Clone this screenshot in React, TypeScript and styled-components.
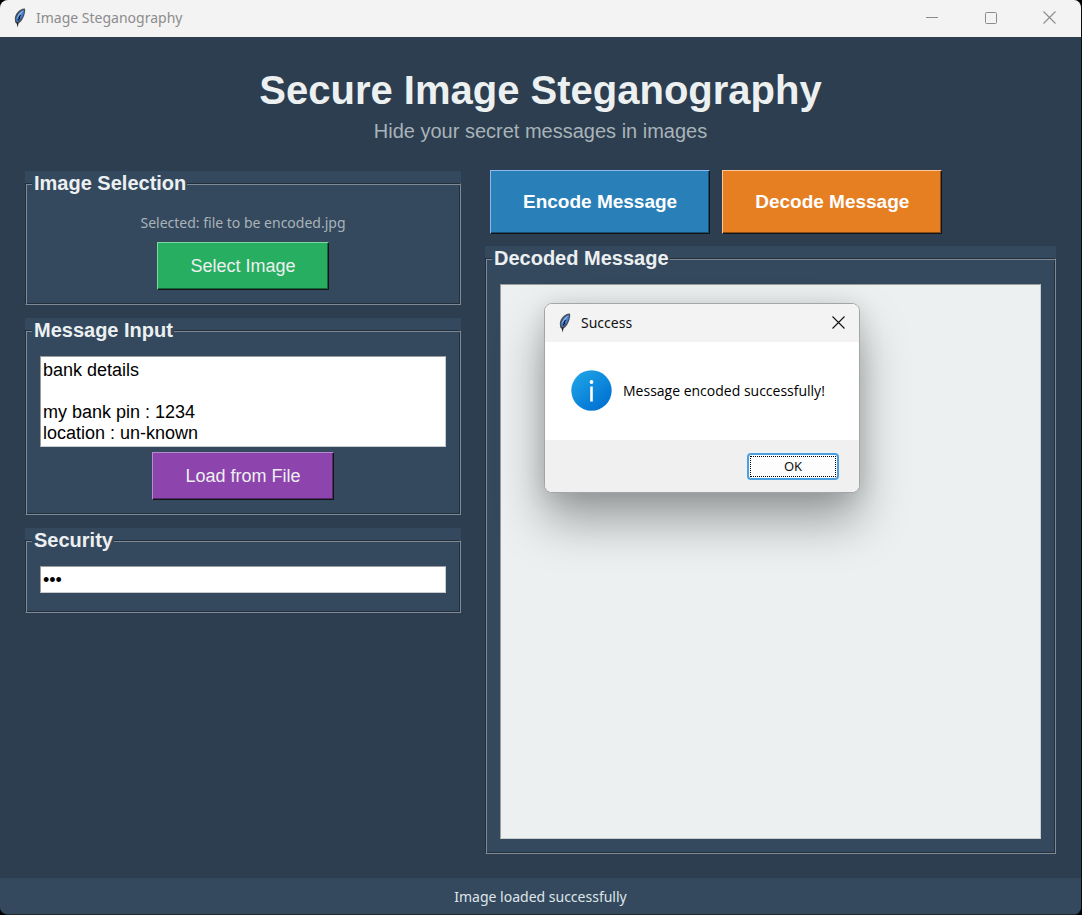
import React, { useState } from "react";
import styled, { createGlobalStyle, css } from "styled-components";

const ARIAL = '"Liberation Sans", Arial, sans-serif';
const SEGOE = '"Noto Sans", "Open Sans", sans-serif';

const GlobalStyle = createGlobalStyle`
  * { box-sizing: border-box; }
  body { margin: 0; background: #000; font-family: ${SEGOE}; }
  button, input, textarea { font: inherit; margin: 0; }
`;

const Window = styled.div`
  position: relative;
  display: flex;
  flex-direction: column;
  min-height: 100vh;
  background: #2c3e50;
  border-right: 1px solid #0b0d10;
  border-bottom: 1px solid #24282d;
  border-radius: 8px;
  overflow: hidden;
`;

const TitleBar = styled.header`
  display: flex;
  align-items: center;
  gap: 8px;
  height: 37px;
  padding: 0 2px 2px 12px;
  background: #f3f3f3;
  color: #8c8c8c;
`;

const WindowTitle = styled.span`
  flex: 1;
  font-size: 14px;
  line-height: 20px;
`;

const CaptionButtons = styled.div`
  display: flex;
`;

const CaptionButton = styled.button`
  display: grid;
  place-items: center;
  width: 59px;
  height: 35px;
  padding: 0;
  border: 0;
  background: transparent;
  color: inherit;
`;

const Main = styled.main`
  flex: 1;
  display: flex;
  flex-direction: column;
  padding: 27px 25px 24px;
`;

const Heading = styled.h1`
  margin: 0;
  color: #ecf0f1;
  font: bold 40px/52px ${ARIAL};
  text-align: center;
`;

const Subtitle = styled.p`
  margin: 0 0 24px;
  color: #a9b3b8;
  font: 20px/30px ${ARIAL};
  text-align: center;
`;

const Columns = styled.div`
  flex: 1;
  display: grid;
  grid-template-columns: 436px 1fr;
  gap: 24px;
`;

const Column = styled.div<{ $gap: number }>`
  display: flex;
  flex-direction: column;
  gap: ${(p) => p.$gap}px;
  padding-top: 1px;
`;

const Panel = styled.section<{ $grow?: boolean }>`
  display: flex;
  background: #34495e;
  ${(p) => p.$grow && css`flex: 1;`}
`;

const Group = styled.fieldset`
  flex: 1;
  min-width: 0;
  margin: 0;
  padding: 13px 14px 14px;
  border: 1px solid;
  border-color: #222f3d #7f8a96 #7f8a96 #222f3d;
  box-shadow: inset 1px 1px #7f8a96, inset -1px -1px #222f3d;
`;

const Legend = styled.legend`
  margin-left: -8px;
  padding: 0 1px 0 2px;
  background: #34495e;
  color: #ecf0f1;
  font: bold 20px/25px ${ARIAL};
`;

const Stack = styled.div`
  display: flex;
  flex-direction: column;
  align-items: center;
  gap: 5px;
  height: 100%;
`;

const FileLabel = styled.p`
  margin: 0;
  color: #a9b3b8;
  font-size: 14px;
  line-height: 28px;
`;

const PushButton = styled.button<{ $bg: string; $light: string; $dark: string }>`
  height: 48px;
  padding: 0 32px;
  border: 1px solid;
  border-color: ${(p) => p.$light} #101418 #101418 ${(p) => p.$light};
  box-shadow: inset -1px -1px ${(p) => p.$dark};
  background: ${(p) => p.$bg};
  color: #ecf0f1;
  font: 18px/22px ${ARIAL};
`;

const ActionButton = styled(PushButton)`
  height: 64px;
  color: #fff;
  font-size: 19px;
  font-weight: bold;
`;

const Actions = styled.div`
  display: flex;
  gap: 12px;
  padding-left: 5px;
  margin-top: -1px;
`;

const sunken = css`
  border: 1px solid;
  border-color: #9c9c9c #c8ccce #c8ccce #9c9c9c;
  border-radius: 0;
  outline: 0;
  resize: none;
  width: 100%;
  color: #000;
  font: 18px/21px ${ARIAL};
`;

const MessageBox = styled.textarea`
  ${sunken}
  display: block;
  height: 91px;
  padding: 3px 2px 0;
  background: #fff;
  overflow: hidden;
`;

const DecodedBox = styled(MessageBox)`
  height: 100%;
  background: #ecf0f1;
`;

const PasswordBox = styled.input`
  ${sunken}
  height: 27px;
  margin-bottom: 5px;
  padding: 2px 2px 0;
  background: #fff;
`;

const StatusBar = styled.footer`
  height: 36px;
  background: #34495e;
  color: #dfe5e8;
  font-size: 14px;
  line-height: 38px;
  text-align: center;
`;

const Dialog = styled.div`
  position: absolute;
  left: 544px;
  top: 303px;
  width: 316px;
  border: 1px solid #a3a5a6;
  border-radius: 8px;
  background: #fff;
  box-shadow: 0 28px 48px rgba(0, 0, 0, 0.34), 0 2px 24px rgba(0, 0, 0, 0.12);
`;

const DialogBar = styled.div`
  display: flex;
  align-items: center;
  gap: 8px;
  height: 38px;
  padding: 0 0 1px 12px;
  border-radius: 7px 7px 0 0;
  background: #f3f3f3;
  color: #111;
`;

const CloseButton = styled(CaptionButton)`
  width: 42px;
`;

const DialogBody = styled.div`
  display: flex;
  align-items: center;
  gap: 11px;
  height: 98px;
  padding: 0 0 1px 26px;
  color: #000;
  font-family: "Open Sans", sans-serif;
  font-size: 14px;
`;

const DialogFooter = styled.div`
  display: flex;
  justify-content: flex-end;
  padding: 13px 20px 12px;
  border-radius: 0 0 7px 7px;
  background: #f0f0f0;
`;

const OkButton = styled.button`
  width: 92px;
  height: 27px;
  padding: 1px;
  border: 2px solid #4a9fe0;
  border-radius: 4px;
  background: #fdfdfd;
  color: #111;
  font-size: 13px;
  line-height: 19px;
`;

const FocusRing = styled.span`
  display: block;
  border: 1px dotted #000;
`;

function Feather() {
  return (
    <svg width="16" height="20" viewBox="0 0 16 20" aria-hidden="true">
      <path d="M13 0.6 L10.4 0.8 C6.6 2.2 3.2 6.2 2.8 10.5 L3.2 14.4 L5 15.6 L5.6 19.6 L6.6 15.6 C10.4 13 12.8 8 13.2 2.6 Z" fill="#4a4e56" />
      <path d="M12.2 1.8 C8.4 2.8 4.8 7 4 11.6 L5 14.2 C9.2 11.8 11.8 7.4 12.2 1.8 Z" fill="#3f7fd6" />
      <path d="M11.4 2.4 C8.4 3.4 5.6 6.8 4.6 10.6 L6.4 9.4 L9.4 5.4 Z" fill="#84b2ea" />
      <path d="M8.6 7 L7 9.4 L7.6 10.4 L5.8 12.4" fill="none" stroke="#0c1626" strokeWidth="1.2" />
      <path d="M4.4 14.6 L5.6 18.8 L6 14.6 Z" fill="#111" />
    </svg>
  );
}

function CloseGlyph() {
  return (
    <svg width="13" height="13" viewBox="0 0 13 13" aria-hidden="true">
      <path d="M0.5 0.5 L12.5 12.5 M12.5 0.5 L0.5 12.5" stroke="currentColor" strokeWidth="1.1" />
    </svg>
  );
}

function InfoIcon() {
  return (
    <svg width="41" height="41" viewBox="0 0 41 41" aria-hidden="true">
      <defs>
        <linearGradient id="info" x1="0.1" y1="0.1" x2="0.8" y2="0.95">
          <stop offset="0" stopColor="#1ea2e6" />
          <stop offset="1" stopColor="#0071d2" />
        </linearGradient>
      </defs>
      <circle cx="20.5" cy="20.5" r="20.2" fill="url(#info)" />
      <circle cx="20.5" cy="12" r="1.9" fill="#fff" />
      <path d="M20.5 16.5 V31.5" stroke="#fff" strokeWidth="2.6" />
    </svg>
  );
}

export default function App() {
  const [message, setMessage] = useState("bank details\n\nmy bank pin : 1234\nlocation : un-known");
  const [password, setPassword] = useState("123");

  return (
    <>
      <GlobalStyle />
      <Window>
        <TitleBar>
          <Feather />
          <WindowTitle>Image Steganography</WindowTitle>
          <CaptionButtons>
            <CaptionButton aria-label="Minimize">
              <svg width="12" height="13" viewBox="0 0 12 13"><path d="M0 6.5 H12" stroke="currentColor" /></svg>
            </CaptionButton>
            <CaptionButton aria-label="Maximize">
              <svg width="12" height="12" viewBox="0 0 12 12">
                <rect x="0.5" y="0.5" width="11" height="11" rx="1" fill="none" stroke="currentColor" />
              </svg>
            </CaptionButton>
            <CaptionButton aria-label="Close"><CloseGlyph /></CaptionButton>
          </CaptionButtons>
        </TitleBar>

        <Main>
          <Heading>Secure Image Steganography</Heading>
          <Subtitle>Hide your secret messages in images</Subtitle>
          <Columns>
            <Column $gap={13}>
              <Panel>
                <Group>
                  <Legend>Image Selection</Legend>
                  <Stack>
                    <FileLabel>Selected: file to be encoded.jpg</FileLabel>
                    <PushButton $bg="#27ae60" $light="#7fd8a2" $dark="#176839">Select Image</PushButton>
                  </Stack>
                </Group>
              </Panel>
              <Panel>
                <Group>
                  <Legend>Message Input</Legend>
                  <Stack>
                    <MessageBox
                      aria-label="Message"
                      spellCheck={false}
                      value={message}
                      onChange={(e) => setMessage(e.target.value)}
                    />
                    <PushButton $bg="#8e44ad" $light="#b58ad0" $dark="#552968">Load from File</PushButton>
                  </Stack>
                </Group>
              </Panel>
              <Panel>
                <Group>
                  <Legend>Security</Legend>
                  <PasswordBox
                    type="password"
                    aria-label="Password"
                    value={password}
                    onChange={(e) => setPassword(e.target.value)}
                  />
                </Group>
              </Panel>
            </Column>

            <Column $gap={12}>
              <Actions>
                <ActionButton $bg="#2980b9" $light="#8db8f0" $dark="#194d6f">Encode Message</ActionButton>
                <ActionButton $bg="#e67e22" $light="#ffc796" $dark="#8a4c14">Decode Message</ActionButton>
              </Actions>
              <Panel $grow>
                <Group>
                  <Legend>Decoded Message</Legend>
                  <DecodedBox aria-label="Decoded message" readOnly />
                </Group>
              </Panel>
            </Column>
          </Columns>
        </Main>

        <StatusBar>Image loaded successfully</StatusBar>

        <Dialog role="dialog" aria-label="Success">
          <DialogBar>
            <Feather />
            <WindowTitle>Success</WindowTitle>
            <CloseButton aria-label="Close"><CloseGlyph /></CloseButton>
          </DialogBar>
          <DialogBody>
            <InfoIcon />
            <span>Message encoded successfully!</span>
          </DialogBody>
          <DialogFooter>
            <OkButton><FocusRing>OK</FocusRing></OkButton>
          </DialogFooter>
        </Dialog>
      </Window>
    </>
  );
}
